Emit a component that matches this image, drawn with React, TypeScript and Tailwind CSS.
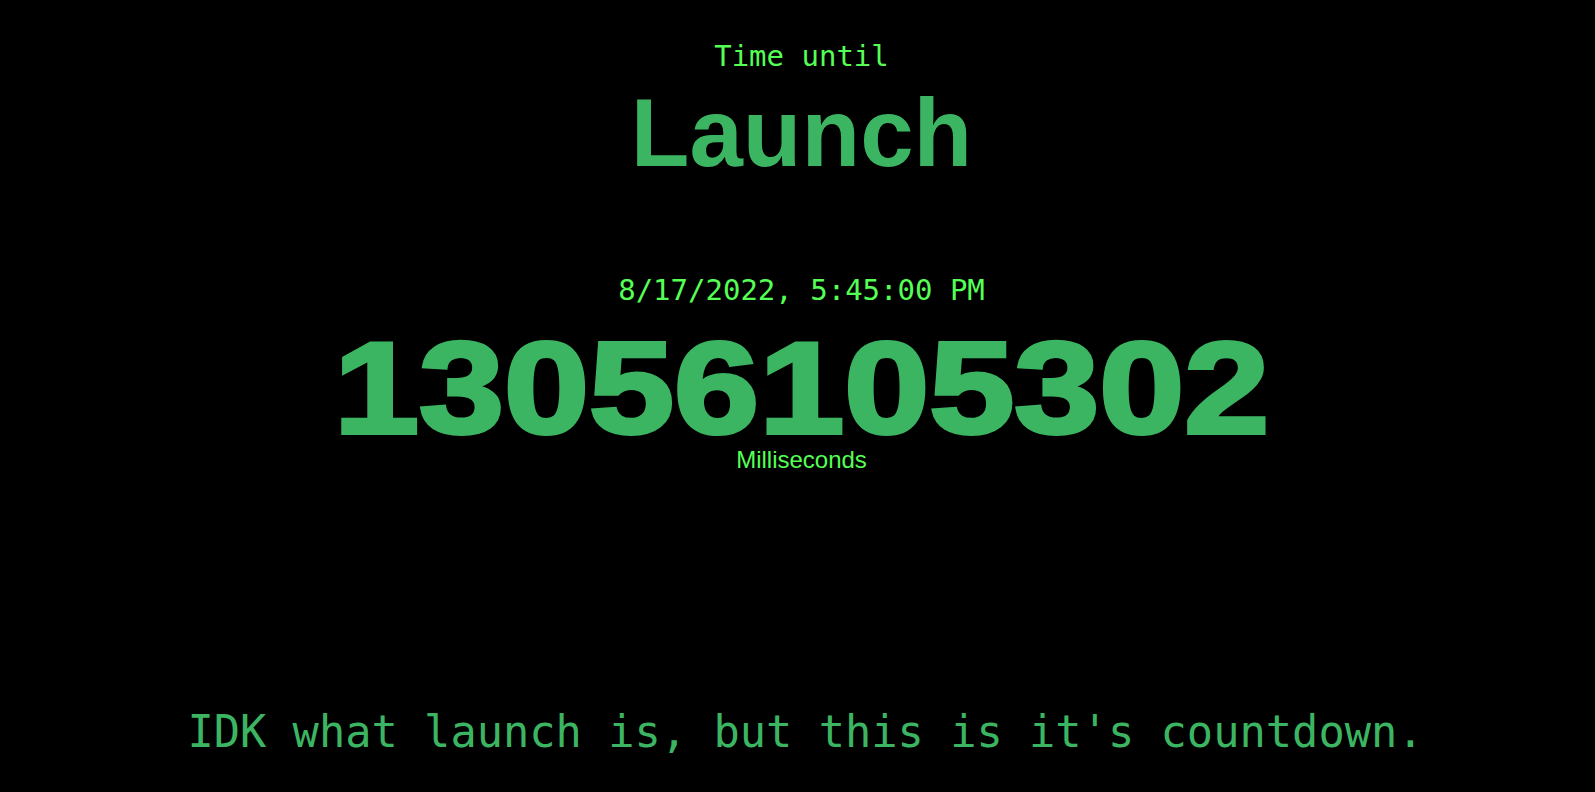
import React from 'react';

const mono = "font-['DejaVu_Sans_Mono',monospace]";
const sans = "font-['Liberation_Sans',Arial,sans-serif]";

export default function App() {
  const target = '8/17/2022, 5:45:00 PM';
  const remaining = '13056105302';

  return (
    <div className="min-h-[792px] w-full bg-black flex flex-col items-center pt-[42px] pl-[8px]">
      <p className={`${mono} text-[29px] leading-[29px] text-[#55ff55]`}>Time until</p>
      <h1 className={`${sans} mt-[14px] text-[96px] leading-none font-bold text-[#3cb563]`}>Launch</h1>

      <p className={`${mono} mt-[95px] text-[29px] leading-[29px] text-[#55ff55]`}>{target}</p>
      <div
        className={`${sans} mt-[28px] text-[130px] leading-[110px] font-bold text-[#3cb563] scale-x-[1.176] [-webkit-text-stroke:4px_#3cb563]`}
      >
        {remaining}
      </div>
      <p className={`${sans} mt-[5px] text-[24px] leading-none text-[#55ff55]`}>Milliseconds</p>

      <p className={`${mono} mt-[238px] ml-[8px] text-[43.7px] leading-[43.7px] text-[#3cb563]`}>
        IDK what launch is, but this is it's countdown.
      </p>
    </div>
  );
}
